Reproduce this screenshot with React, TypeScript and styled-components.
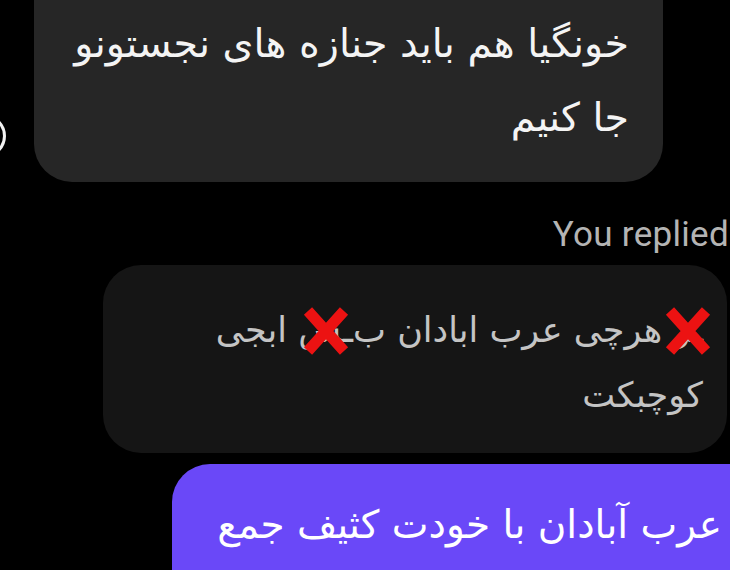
import React from "react";
import styled, { createGlobalStyle } from "styled-components";

const Global = createGlobalStyle`
  html, body { margin: 0; padding: 0; background: #000; }
  #root { width: 730px; height: 570px; overflow: hidden; }
`;

const Screen = styled.div`
  width: 730px;
  height: 570px;
  background: #000;
  overflow: hidden;
  display: flex;
  flex-direction: column;
  font-family: "DejaVu Sans", "Noto Sans", sans-serif;
  & > * { flex: none; }
`;

const IncomingRow = styled.div`
  display: flex;
  align-items: flex-end;
`;

const Avatar = styled.div`
  width: 38px;
  height: 38px;
  margin-left: -38px;
  margin-right: 28px;
  margin-bottom: 24px;
  border-radius: 50%;
  border: 3px solid #f2f2f2;
  flex: none;
`;

const Bubble = styled.div<{ $bg: string; $color: string }>`
  background: ${(p) => p.$bg};
  color: ${(p) => p.$color};
  direction: rtl;
  text-align: right;
  font-size: 39px;
  line-height: 74px;
  white-space: nowrap;
`;

const TopBubble = styled(Bubble)`
  width: 629px;
  box-sizing: border-box;
  padding: 6px 34px 28px 20px;
  border-radius: 0 0 38px 38px;
  font-size: 39.6px;
`;

const RepliedLabel = styled.div`
  margin-top: 33px;
  align-self: flex-end;
  margin-right: 1px;
  font-family: Roboto, "Liberation Sans", sans-serif;
  font-size: 35px;
  letter-spacing: 0.3px;
  color: #b4b4b4;
  line-height: 40px;
`;

const ReplyBubble = styled(Bubble)`
  margin-top: 10px;
  margin-left: 103px;
  width: 624px;
  height: 188px;
  box-sizing: border-box;
  padding: 33px 24px 0 20px;
  border-radius: 38px;
  font-size: 35px;
  line-height: 65px;
`;

const SentBubble = styled(Bubble)`
  margin-top: 11px;
  margin-left: 172px;
  width: 600px;
  height: 140px;
  box-sizing: border-box;
  padding: 24px 50px 0 20px;
  border-radius: 38px 38px 0 0;
`;

const Censored = styled.span`
  position: relative;
  display: inline-block;
`;

const XMark = styled.svg`
  position: absolute;
  left: 50%;
  top: 50%;
  width: 48px;
  height: 50px;
  transform: translate(-50%, -50%);
  pointer-events: none;
`;

const Cross = () => (
  <XMark viewBox="0 0 48 50">
    <path d="M6 5 L42 45 M42 5 L6 45" stroke="#ec1212" strokeWidth="11" strokeLinecap="butt" />
  </XMark>
);

export default function App() {
  return (
    <>
      <Global />
      <Screen>
        <IncomingRow>
          <Avatar />
          <TopBubble $bg="#262626" $color="#f4f4f4">
            خونگیا هم باید جنازه های نجستونو
            <br />
            جا کنیم
          </TopBubble>
        </IncomingRow>
        <RepliedLabel>You replied</RepliedLabel>
        <ReplyBubble $bg="#151515" $color="#c4c4c4">
          <Censored>
            ـر
            <Cross />
          </Censored>{" "}
          هرچی عرب ابادان ب
          <Censored>
            ـس
            <Cross />
          </Censored>{" "}
          ابجی
          <br />
          کوچبکت
        </ReplyBubble>
        <SentBubble $bg="#6a48f8" $color="#ffffff">
          عرب آبادان با خودت کثیف جمع
        </SentBubble>
      </Screen>
    </>
  );
}
